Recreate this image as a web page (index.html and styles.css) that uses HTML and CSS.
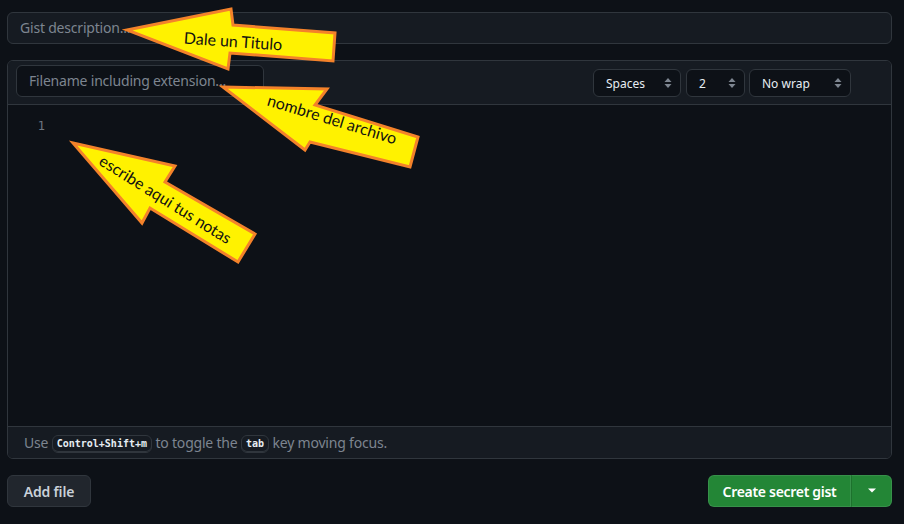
FILE: index.html
```html
<!DOCTYPE html>
<html lang="es">
<head>
<meta charset="utf-8">
<link rel="stylesheet" href="styles.css">
</head>
<body>
<div class="page">
  <div class="desc-input">Gist description...</div>
  <div class="file-box">
    <div class="file-header">
      <div class="name-input">Filename including extension...</div>
      <div class="selects">
        <div class="select sel-spaces"><span>Spaces</span><svg class="updown" width="8" height="12" viewBox="0 0 8 12"><path d="M4 1 L7.5 5 H0.5 Z M4 11 L7.5 7 H0.5 Z" fill="#7d8590"/></svg></div>
        <div class="select sel-size"><span>2</span><svg class="updown" width="8" height="12" viewBox="0 0 8 12"><path d="M4 1 L7.5 5 H0.5 Z M4 11 L7.5 7 H0.5 Z" fill="#7d8590"/></svg></div>
        <div class="select sel-wrap"><span>No wrap</span><svg class="updown" width="8" height="12" viewBox="0 0 8 12"><path d="M4 1 L7.5 5 H0.5 Z M4 11 L7.5 7 H0.5 Z" fill="#7d8590"/></svg></div>
      </div>
    </div>
    <div class="editor">
      <div class="gutter">1</div>
    </div>
    <div class="file-footer">Use <kbd>Control+Shift+m</kbd> to toggle the <kbd>tab</kbd> key moving focus.</div>
  </div>
  <div class="actions">
    <button class="btn">Add file</button>
    <div class="split">
      <button class="btn-green main">Create secret gist</button>
      <button class="btn-green caret"><svg width="10" height="6" viewBox="0 0 10 6"><path d="M1 0.5 H9 L5 4.5 Z" fill="#fff"/></svg></button>
    </div>
  </div>
</div>
<svg class="notes" width="904" height="524" viewBox="0 0 904 524">
  <g class="arrow">
    <polygon points="127,30 231,9 233,25 335,33 333,61 230,53 228,69"/>
    <text x="233" y="47" transform="rotate(4 233 42)" text-anchor="middle">Dale un Titulo</text>
  </g>
  <g class="arrow">
    <polygon points="223,87 327,89 315,105 418,137 410,167 310,142 305,150"/>
    <text x="332" y="125" transform="rotate(17 332 120)" text-anchor="middle">nombre del archivo</text>
  </g>
  <g class="arrow">
    <polygon points="73,143 175,166 165,182 255,234 238,262 150,208 142,223"/>
    <text x="165" y="205" transform="rotate(32 165 200)" text-anchor="middle">escribe aqui tus notas</text>
  </g>
</svg>
</body>
</html>
```
FILE: styles.css
```css
html, body {
  margin: 0;
  padding: 0;
  background: #0d1117;
}
body {
  width: 904px;
  height: 524px;
  overflow: hidden;
  position: relative;
  font-family: "Segoe UI", "Noto Sans", "Open Sans", sans-serif;
  color: #e6edf3;
}
.page {
  padding: 12px 12px 0 7px;
}
.desc-input {
  box-sizing: border-box;
  height: 32px;
  border: 1px solid #30363d;
  border-radius: 6px;
  background: #161b22;
  color: #7d8590;
  font-size: 14px;
  letter-spacing: -0.2px;
  line-height: 30px;
  padding-left: 12px;
  margin-bottom: 16px;
}
.file-box {
  border: 1px solid #30363d;
  border-radius: 6px;
  overflow: hidden;
}
.file-header {
  display: flex;
  align-items: flex-end;
  justify-content: space-between;
  height: 44px;
  box-sizing: border-box;
  padding: 5px 40px 7px 8px;
  background: #161b22;
  border-bottom: 1px solid #30363d;
}
.name-input {
  box-sizing: border-box;
  width: 248px;
  height: 32px;
  border: 1px solid #30363d;
  border-radius: 6px;
  background: #0d1117;
  color: #7d8590;
  font-size: 14px;
  letter-spacing: -0.2px;
  line-height: 30px;
  padding-left: 12px;
}
.selects {
  display: flex;
  gap: 4px;
}
.select {
  box-sizing: border-box;
  height: 28px;
  border: 1px solid #30363d;
  border-radius: 6px;
  background: #0d1117;
  font-size: 12px;
  display: flex;
  align-items: center;
  justify-content: space-between;
  padding: 0 8px 0 12px;
}
.sel-spaces { width: 88px; margin-right: 1px; }
.sel-size { width: 59px; }
.sel-wrap { width: 102px; }
.editor {
  height: 322px;
  background: #0d1117;
  border-bottom: 1px solid #30363d;
  box-sizing: border-box;
}
.gutter {
  width: 37px;
  text-align: right;
  padding-top: 14px;
  font-family: "DejaVu Sans Mono", monospace;
  font-size: 12px;
  color: #6e7681;
}
.file-footer {
  height: 31px;
  box-sizing: border-box;
  background: #161b22;
  color: #7d8590;
  font-size: 14px;
  letter-spacing: -0.2px;
  line-height: 31px;
  padding-left: 16px;
}
kbd {
  display: inline-block;
  font-family: "DejaVu Sans Mono", monospace;
  font-weight: bold;
  font-size: 10px;
  letter-spacing: 0;
  line-height: 16px;
  padding: 0 4px;
  color: #e6edf3;
  background: #161b22;
  border: 1px solid #30363d;
  border-radius: 6px;
  box-shadow: inset 0 -1px 0 #30363d;
  vertical-align: 1px;
}
.actions {
  display: flex;
  justify-content: space-between;
  margin-top: 16px;
}
.btn {
  box-sizing: border-box;
  width: 84px;
  height: 32px;
  background: #21262d;
  border: 1px solid #30363d;
  border-radius: 6px;
  color: #c9d1d9;
  font-family: inherit;
  font-size: 14px;
  letter-spacing: -0.2px;
  font-weight: 600;
  padding: 0;
}
.split {
  display: flex;
}
.btn-green {
  box-sizing: border-box;
  height: 32px;
  background: #238636;
  border: 1px solid rgba(240, 246, 252, 0.1);
  color: #ffffff;
  font-family: inherit;
  font-size: 14px;
  letter-spacing: -0.3px;
  font-weight: 600;
  padding: 0;
}
.btn-green.main {
  width: 143px;
  border-radius: 6px 0 0 6px;
}
.btn-green.caret {
  width: 41px;
  border-left: 1px solid rgba(0, 0, 0, 0.15);
  border-radius: 0 6px 6px 0;
  display: flex;
  align-items: center;
  justify-content: center;
}
.notes {
  position: absolute;
  left: 0;
  top: 0;
  pointer-events: none;
}
.arrow polygon {
  fill: #fff200;
  stroke: #f4822a;
  stroke-width: 3;
  stroke-linejoin: miter;
}
.arrow text {
  font-family: "Lato", "Open Sans", sans-serif;
  font-size: 16px;
  fill: #111;
}
```
